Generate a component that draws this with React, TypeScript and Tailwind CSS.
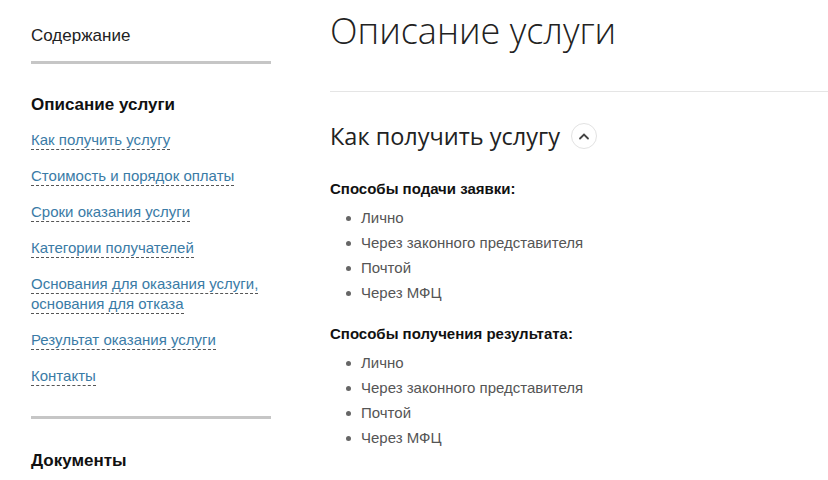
const links: string[][] = [
  ['Как получить услугу'],
  ['Стоимость и порядок оплаты'],
  ['Сроки оказания услуги'],
  ['Категории получателей'],
  ['Основания для оказания услуги,', 'основания для отказа'],
  ['Результат оказания услуги'],
  ['Контакты'],
]

const ways = ['Лично', 'Через законного представителя', 'Почтой', 'Через МФЦ']

function Bullets() {
  return (
    <ul className="mt-[7px] pl-[16px] flex flex-col">
      {ways.map((w) => (
        <li key={w} className="flex items-center h-[25px] text-[15px] text-[#555]">
          <span className="w-[5px] h-[5px] rounded-full bg-[#666] mr-[10px]" />
          {w}
        </li>
      ))}
    </ul>
  )
}

export default function App() {
  return (
    <div className="w-[828px] h-[480px] overflow-hidden bg-white flex font-['Liberation_Sans',Arial,sans-serif]">
      <aside className="w-[240px] ml-[31px] shrink-0">
        <div className="pt-[25px] pb-[14px] text-[17px] text-[#222] leading-[22px]">Содержание</div>
        <div className="h-[3px] bg-[#c6c6c6]" />
        <div className="mt-[30px] text-[17px] font-bold text-[#111] leading-[22px]">Описание услуги</div>
        <nav className="mt-[14px] flex flex-col gap-[16px]">
          {links.map((l) => (
            <a key={l[0]} className="text-[15px] text-[#3a7ba6] flex flex-col items-start">
              {l.map((t) => (
                <span key={t} className="border-b border-dashed border-[#555] leading-[19px]">
                  {t}
                </span>
              ))}
            </a>
          ))}
        </nav>
        <div className="mt-[30px] h-[3px] bg-[#c6c6c6]" />
        <div className="mt-[31px] text-[17px] font-bold text-[#111] leading-[22px]">Документы</div>
      </aside>
      <main className="ml-[59px] flex-1">
        <h1 className="pt-[6px] font-['Open_Sans',sans-serif] font-light text-[36px] leading-[50px] text-[#222]">
          Описание услуги
        </h1>
        <div className="mt-[35px] h-px bg-[#e5e5e5]" />
        <div className="mt-[27px] flex items-center gap-[11px]">
          <h2 className="font-['Open_Sans',sans-serif] text-[23.5px] leading-[34px] text-[#222]">
            Как получить услугу
          </h2>
          <button className="w-[26px] h-[26px] rounded-full border border-[#e2e2e2] flex items-center justify-center">
            <svg width="12" height="8" viewBox="0 0 12 8" fill="none">
              <path d="M2 6.5 6 2.5 10 6.5" stroke="#444" strokeWidth="1.8" strokeLinecap="round" />
            </svg>
          </button>
        </div>
        <div className="mt-[26px] text-[15px] font-bold text-[#111] leading-[20px]">Способы подачи заявки:</div>
        <Bullets />
        <div className="mt-[18px] text-[15px] font-bold text-[#111] leading-[20px]">Способы получения результата:</div>
        <Bullets />
      </main>
    </div>
  )
}
